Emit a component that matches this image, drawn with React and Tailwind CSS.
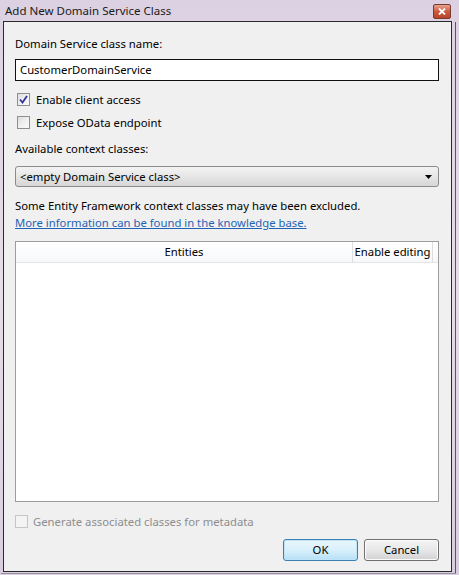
import React from "react";

const font = { fontFamily: '"Segoe UI", "Noto Sans", "Open Sans", sans-serif' };

function CheckBox({ checked, disabled }) {
  return (
    <span
      className={
        "flex h-[13px] w-[13px] shrink-0 items-center justify-center border " +
        (disabled
          ? "border-[#c6c6c6] bg-[#f4f4f4]"
          : "border-[#8e8f8f] bg-gradient-to-br from-[#dcdcdc] via-[#f0f0f0] to-[#fbfbfb]")
      }
    >
      {checked && (
        <svg width="9" height="9" viewBox="0 0 9 9">
          <path d="M1 4.5 L3.5 7.5 L8 1" fill="none" stroke="#30359a" strokeWidth="1.8" />
        </svg>
      )}
    </span>
  );
}

export default function App() {
  return (
    <div
      className="relative flex h-[575px] w-[459px] flex-col bg-gradient-to-b from-[#dcd1e2] via-[#e6dde8] to-[#d9cedf] text-[11.3px] text-black"
      style={font}
    >
      {/* title bar */}
      <div className="flex h-[21px] items-center pl-[5px] pr-[8px]">
        <span className="flex-1 text-[11.5px] leading-none text-[#1a1a1a]">Add New Domain Service Class</span>
        <span className="mt-[2px] flex h-[15px] w-[18px] items-center justify-center rounded-[2px] border border-[#7a3a2e] bg-gradient-to-b from-[#e6a590] via-[#cd5a3f] to-[#b8432a]">
          <svg width="8" height="7" viewBox="0 0 8 7">
            <path d="M1 0.5 L7 6.5 M7 0.5 L1 6.5" stroke="#fff" strokeWidth="1.8" />
          </svg>
        </span>
      </div>

      {/* frame edge on the right */}
      <div className="absolute right-[3px] top-[22px] bottom-[1px] w-[1px] bg-[#5a565c]" />
      <div className="absolute bottom-[1px] left-[1px] right-[3px] h-[1px] bg-[#9a929e]" />

      {/* client area */}
      <div className="ml-[3px] mr-[7px] flex h-[551px] flex-col border border-[#2a2a2a] bg-[#f0f0f0] pl-[11px] pr-[12px] pt-[14px]">
        <div className="h-[15px] leading-[15px]">Domain Service class name:</div>

        <div className="mt-[8px] flex h-[22px] items-center border-[1.5px] border-[#111] bg-white pl-[4px] leading-none">
          CustomerDomainService
        </div>

        <div className="mt-[11px] flex h-[15px] items-center gap-[6px] pl-[2px] leading-none">
          <CheckBox checked />
          <span>Enable client access</span>
        </div>
        <div className="mt-[8px] flex h-[15px] items-center gap-[6px] pl-[2px] leading-none">
          <CheckBox />
          <span>Expose OData endpoint</span>
        </div>

        <div className="mt-[11px] h-[15px] leading-[15px]">Available context classes:</div>

        <div className="mt-[10px] flex h-[21px] items-center justify-between rounded-[3px] border border-[#8b8b8b] bg-gradient-to-b from-[#f3f3f3] via-[#e6e6e6] to-[#d6d6d6] pl-[4px] pr-[6px] leading-none">
          <span>&lt;empty Domain Service class&gt;</span>
          <svg width="7" height="4" viewBox="0 0 7 4">
            <path d="M0 0 H7 L3.5 4 Z" fill="#000" />
          </svg>
        </div>

        <div className="mt-[11px] h-[15px] leading-[15px]">
          Some Entity Framework context classes may have been excluded.
        </div>
        <div className="mt-[2px] h-[15px] leading-[15px] text-[#1f64b4] underline decoration-[#1f64b4]">
          More information can be found in the knowledge base.
        </div>

        {/* entity grid */}
        <div className="mt-[11px] flex h-[261px] flex-col border border-[#9c9c9c] bg-white">
          <div className="flex h-[21px] border-b border-[#e5e5e5] bg-gradient-to-b from-white to-[#f7f8fa] leading-none">
            <div className="flex flex-1 items-center justify-center border-r border-[#dedede]">Entities</div>
            <div className="flex w-[80px] items-center justify-center whitespace-nowrap border-r border-[#dedede]">Enable editing</div>
            <div className="w-[5px]" />
          </div>
          <div className="flex-1" />
        </div>

        <div className="mt-[12px] flex h-[15px] items-center gap-[5px] leading-none text-[#8d8d8d]">
          <CheckBox disabled />
          <span>Generate associated classes for metadata</span>
        </div>

        <div className="mt-[10px] flex justify-end gap-[6px]">
          <button className="flex h-[22px] w-[75px] items-center justify-center rounded-[3px] border border-[#3c7fb1] bg-gradient-to-b from-[#eaf6fd] via-[#d9f0fc] to-[#b6dff5] leading-none shadow-[inset_0_0_0_1px_#bfe4f8]">
            OK
          </button>
          <button className="flex h-[22px] w-[75px] items-center justify-center rounded-[3px] border border-[#707070] bg-gradient-to-b from-[#f4f4f4] via-[#e8e8e8] to-[#d2d2d2] leading-none shadow-[inset_0_0_0_1px_#fbfbfb]">
            Cancel
          </button>
        </div>
      </div>
    </div>
  );
}
